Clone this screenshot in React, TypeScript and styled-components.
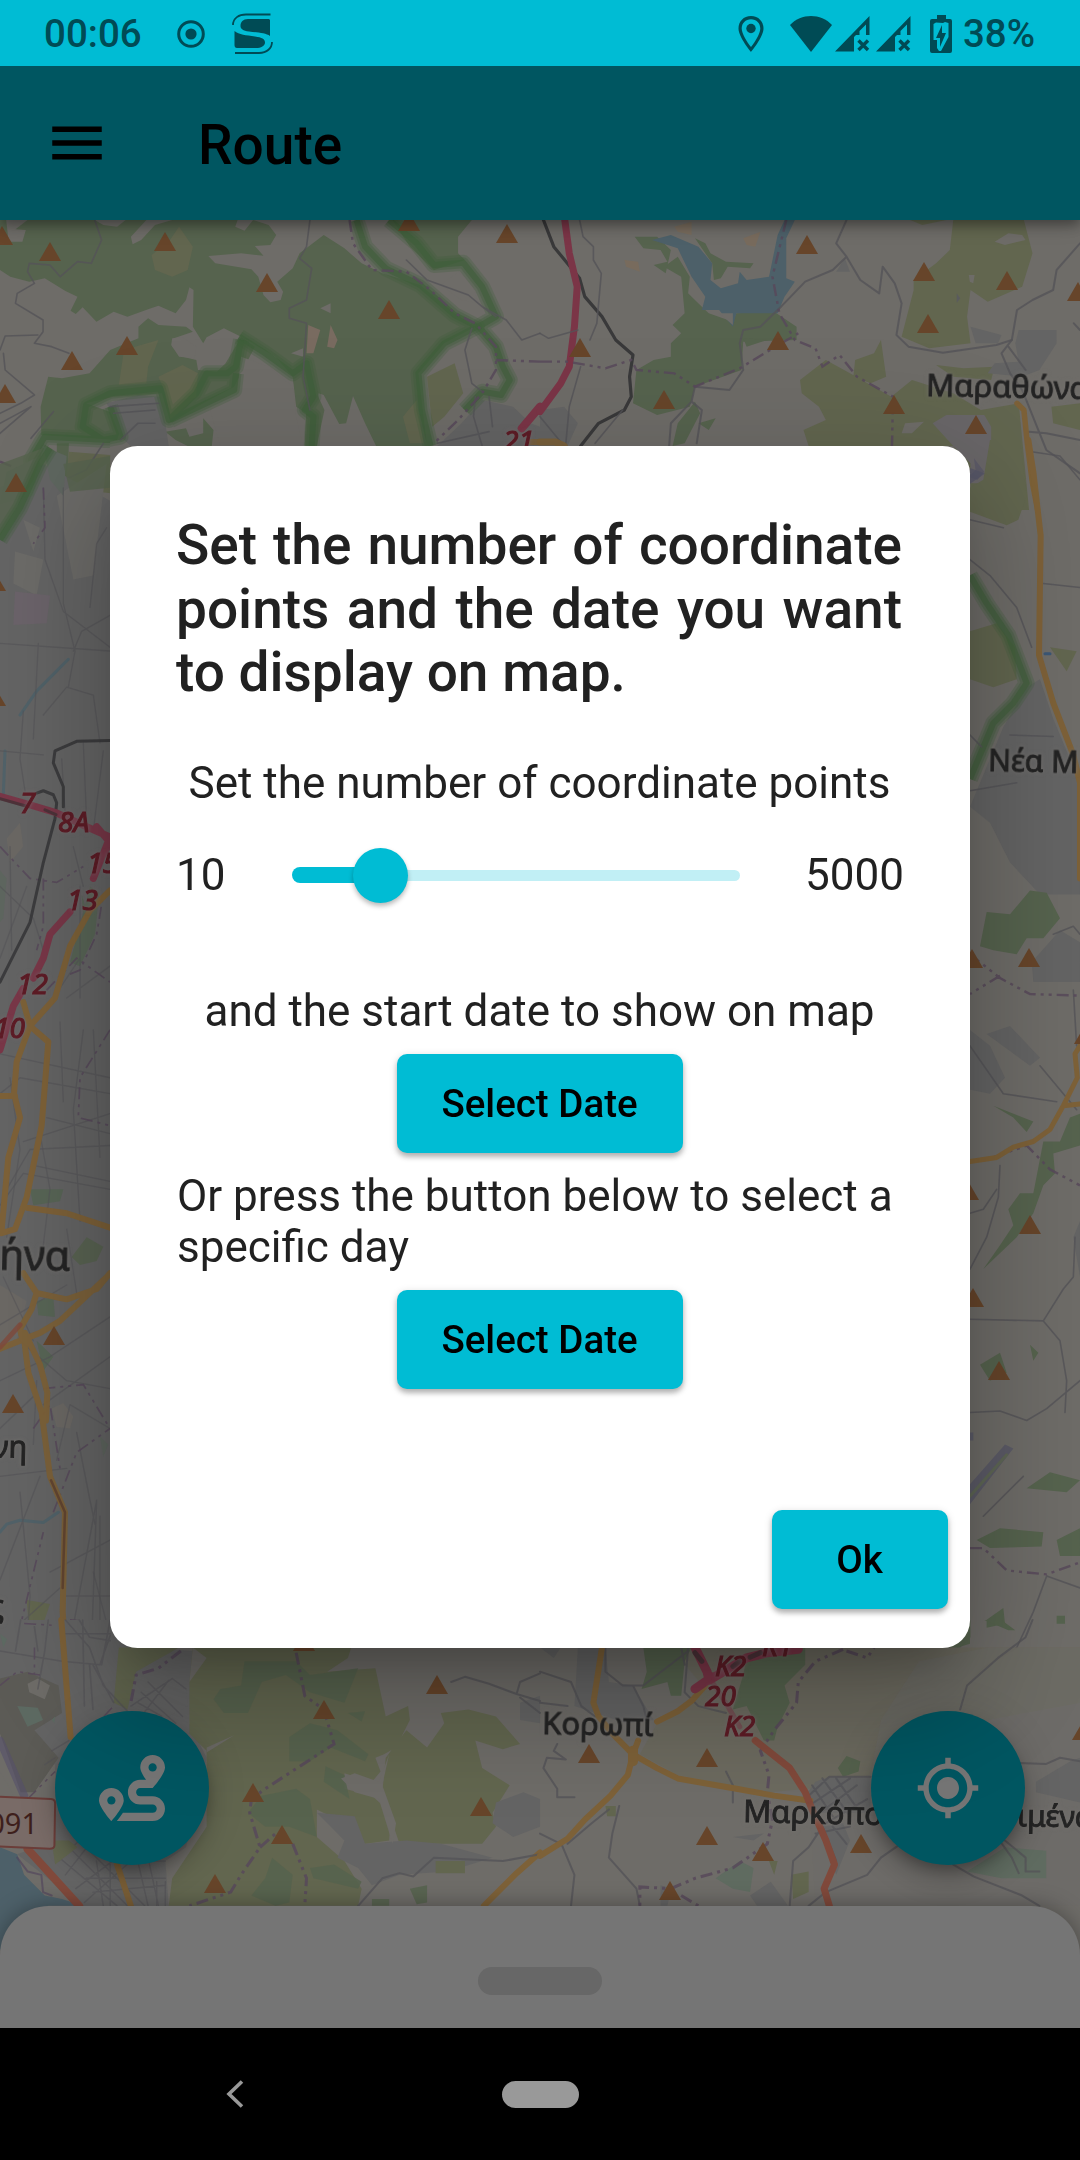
import React from "react";
import styled, { createGlobalStyle, css } from "styled-components";
import { FaRoute } from "react-icons/fa";
import { MdMenu, MdMyLocation } from "react-icons/md";

const cyan = "#00bcd4";
const statusInk = "#004b55";

const GlobalStyle = createGlobalStyle`
  * { box-sizing: border-box; }
  body { margin: 0; background: #000; font-family: Roboto, sans-serif; }
`;

const Screen = styled.div`
  width: 1080px;
  height: 2160px;
  display: flex;
  flex-direction: column;
  overflow: hidden;
  position: relative;
`;

const StatusBar = styled.header`
  height: 66px;
  flex: none;
  z-index: 2;
  display: flex;
  align-items: center;
  justify-content: space-between;
  padding: 2px 45px 0 44px;
  background: ${cyan};
  color: ${statusInk};
  font-size: 38.5px;
  font-weight: 500;
  line-height: 64px;
`;

const StatusGroup = styled.div`
  display: flex;
  align-items: center;
`;

const StatusIcon = styled.svg<{ $gap?: number }>`
  display: block;
  margin-left: ${(p) => p.$gap ?? 0}px;
  fill: ${statusInk};
`;

const StatusText = styled.span<{ $gap?: number }>`
  margin-left: ${(p) => p.$gap ?? 0}px;
`;

const AppBar = styled.div`
  height: 154px;
  flex: none;
  display: flex;
  align-items: center;
  gap: 88px;
  padding: 0 44px;
  background: #005661;
  color: #000;
  box-shadow: 0 5px 11px rgba(0, 0, 0, 0.3), 0 2px 22px rgba(0, 0, 0, 0.2);
  z-index: 1;
`;

const AppTitle = styled.h1`
  margin: 0;
  font-size: 55px;
  font-weight: 500;
  line-height: 64px;
  padding-top: 4px;
`;

const MapArea = styled.main`
  flex: 1;
  position: relative;
  overflow: hidden;
  background: #6e6c68;
`;

const MapCanvas = styled.svg`
  display: block;
  path { vector-effect: non-scaling-stroke; }
`;

const LabelLayer = styled.g`
  font-family: "Noto Sans", sans-serif;
  fill: #242424;
  stroke: #242424;
  stroke-width: 0.9px;
  filter: drop-shadow(0 0 2px #75726f);
`;

const JunctionLayer = styled.g`
  font-family: "Noto Sans", sans-serif;
  font-style: italic;
  font-size: 28px;
  fill: #5e1c26;
  stroke: #5e1c26;
  stroke-width: 1.1px;
  filter: drop-shadow(0 0 2px #75686b);
`;

const BottomSheet = styled.section`
  position: absolute;
  left: 0;
  right: 0;
  bottom: 0;
  height: 122px;
  display: flex;
  justify-content: center;
  padding-top: 61px;
  border-radius: 49px 49px 0 0;
  background: #757575;
  box-shadow: 0 0 22px rgba(0, 0, 0, 0.35);
`;

const Handle = styled.div`
  width: 124px;
  height: 27.5px;
  border-radius: 14px;
  background: #676767;
`;

const Fab = styled.button<{ $side: "left" | "right" }>`
  position: absolute;
  ${(p) => p.$side}: 55px;
  bottom: 163px;
  width: 154px;
  height: 154px;
  border: 0;
  padding: 0;
  border-radius: 50%;
  display: flex;
  align-items: center;
  justify-content: center;
  background: #005661;
  color: #757575;
  box-shadow: 0 8px 14px -3px rgba(0, 0, 0, 0.25), 0 16px 28px rgba(0, 0, 0, 0.15), 0 3px 40px rgba(0, 0, 0, 0.13);
`;

const NavBar = styled.nav`
  height: 132px;
  flex: none;
  display: grid;
  grid-template-columns: 469px 142px 469px;
  align-items: center;
  justify-items: center;
  background: #000;
`;

const HomePill = styled.div`
  width: 77px;
  height: 27px;
  border-radius: 14px;
  background: #999;
`;

const Dialog = styled.section`
  position: absolute;
  z-index: 2;
  left: 110px;
  top: 446px;
  width: 860px;
  height: 1201.5px;
  display: flex;
  flex-direction: column;
  padding: 68px 66px 22px;
  border-radius: 27.5px;
  background: #fff;
  color: #212121;
  box-shadow: 0 30px 41px -19px rgba(0, 0, 0, 0.2), 0 66px 104px 8px rgba(0, 0, 0, 0.14), 0 25px 126px 22px rgba(0, 0, 0, 0.12);
`;

const DialogTitle = styled.h2`
  margin: 0 0 53px;
  padding-right: 2px;
  font-size: 55px;
  font-weight: 500;
  line-height: 63.5px;
  text-align: justify;
`;

const Body = styled.p<{ $center?: boolean }>`
  margin: 0;
  padding: 1px 0 0 1px;
  font-size: 44px;
  line-height: 51.6px;
  ${(p) => p.$center && css`padding: 0 1px 0 0; text-align: center;`}
`;

const SliderRow = styled.div`
  height: 132px;
  margin-bottom: 45px;
  display: flex;
  align-items: center;
  justify-content: space-between;
  font-size: 44px;
`;

const Track = styled.div`
  width: 448px;
  margin-right: auto;
  margin-left: 67px;
  display: flex;
  align-items: center;
`;

const ActiveTrack = styled.div`
  width: 88px;
  height: 16.5px;
  border-radius: 8px 0 0 8px;
  background: ${cyan};
`;

const RestTrack = styled.div`
  flex: 1;
  height: 11px;
  border-radius: 0 6px 6px 0;
  background: #c1eff5;
`;

const Thumb = styled.div`
  width: 55px;
  height: 55px;
  margin: 0 -27.5px;
  border-radius: 50%;
  background: ${cyan};
  box-shadow: 0 3px 5px rgba(0, 0, 0, 0.28);
  z-index: 1;
`;

const ButtonRow = styled.div<{ $end?: boolean }>`
  height: 132px;
  flex: none;
  display: flex;
  align-items: center;
  justify-content: ${(p) => (p.$end ? "flex-end" : "center")};
  ${(p) => p.$end && css`margin: auto -44px 0 0;`}
`;

const Raised = styled.button<{ $width: number }>`
  width: ${(p) => p.$width}px;
  height: 99px;
  border: 0;
  padding: 1px 1px 0 0;
  border-radius: 10px;
  background: ${cyan};
  color: #000;
  font: 500 38.5px/46px Roboto, sans-serif;
  box-shadow: 0 4px 5px rgba(0, 0, 0, 0.22), 0 2px 9px rgba(0, 0, 0, 0.15);
`;

const forest = "#56634e";
const scrub = "#62664f";
const town = "#646464";
const water = "#4d6069";
const orange = "#7d6138";
const motorway = "#7b3547";
const trunk = "#80493b";

type ShapeProps = { d: string; c?: string; w?: number; o?: number };

const Area = ({ d, c = forest, o = 1 }: ShapeProps) => <path d={d} fill={c} opacity={o} />;
const Road = ({ d, c = "#555458", w = 1.6, o = 0.8 }: ShapeProps) => (
  <path d={d} fill="none" stroke={c} strokeWidth={w} opacity={o} strokeLinejoin="round" strokeLinecap="round" />
);
const Border = ({ d, w = 2.4 }: ShapeProps) => (
  <path d={d} fill="none" stroke="#58495b" strokeWidth={w} strokeDasharray="12 5 3 5 3 5" opacity={0.85} />
);
const Park = ({ d }: ShapeProps) => (
  <g fill="none" stroke="#3f5f3a" strokeLinejoin="round">
    <path d={d} strokeWidth={16} opacity={0.28} />
    <path d={d} strokeWidth={11} opacity={0.35} />
    <path d={d} strokeWidth={6} opacity={0.6} />
  </g>
);

const NorthWest = () => (
  <g transform="translate(0 210) scale(.3444 .3333)">
    <Area d="M0 30H18L25 95H65L75 60 45 58 80 30H275L300 45 340 50 365 30H425L380 80 385 103 410 90 450 45 500 30H690L683 50 710 62 735 30 780 45 802 75 785 105 740 108 765 137 700 130 605 138 625 160 730 178 750 200 765 255 785 277 815 270 822 245 805 215 850 175 870 130 895 110 940 75 1000 115 1050 160 1110 190 1220 225 1320 310 1380 350 1290 400 1215 490 1240 708H1092L1060 640 1025 558 1005 640 985 642 940 555 925 550 910 600 905 708H885L890 600 860 560 850 500 800 440 700 380 650 355 600 382 590 400 560 350 562 240 550 232 540 270 510 310 460 287 430 298 370 320 330 305 280 335 240 292 220 312 205 302 225 260 190 243 130 205 85 215 30 200 0 180z" />
    <Area d="M402 350 430 325 460 345 540 350 560 365 505 385 500 410 530 440 570 450 575 480 630 485 655 460 690 400 700 380 740 410 680 530 590 580 495 638 470 550 330 560 250 580 330 610 350 660 340 690 120 675 118 590 140 500 180 505 260 490 320 420 402 385z" />
    <Area d="M850 500 905 450 915 540 942 600 920 708H885L890 610 860 590zM1140 30H1370L1330 80 1330 130 1350 150 1260 180 1190 110zM480 665 540 655 550 680 590 670 590 625 620 660 615 708H545L510 690zM165 700 200 700 195 860 170 868 160 820 125 790 165 745z" />
    <Area c={scrub} d="M360 420 460 390 430 470 425 520 345 525zM460 500 530 465 575 490 570 560 495 630 480 550zM1240 500 1320 460 1345 550 1290 620 1255 650zM440 135 490 95 520 50 560 110 545 180 500 200 450 180zM1170 620 1210 570 1230 700 1190 700zM200 725 320 735V850L190 832z" />
    <Area c="#6e6c68" d="M700 440 690 540 610 600 640 708H880L860 620 850 530 780 470zM500 385 530 382 570 410 565 445 520 440 497 405zM930 295 960 280 960 310zM845 430 880 415 880 440zM1380 360 1430 420 1435 490 1400 540 1365 500 1355 410zM1280 225 1330 185 1370 220 1390 280 1340 270z" />
    <Area c="#796b60" d="M895 345 930 360 910 430 890 430zM960 345 980 390 970 415 950 410z" />
    <Area c={town} d="M310 580 400 555 465 560 480 640 490 708H380L350 680zM1340 640 1400 570 1490 590 1540 640 1568 650V708H1270zM100 885 140 870 260 900H110z" />
    <Park d="M1035 30 1060 110 1120 175 1220 225 1320 315 1385 350 1290 400 1215 490 1225 600 1250 708" />
    <Park d="M1130 30 1210 100 1260 165 1345 158 1400 230 1440 320 1390 350 1440 410 1460 470 1480 510 1455 555 1400 545 1350 600" />
    <Park d="M695 380 770 430 850 490 890 460 910 560 885 600 910 620 905 708" />
    <Park d="M700 390 685 470 660 490 600 490 570 550 490 630 465 535 320 550 250 585 240 650 300 690 350 680 320 590M495 630 680 540 685 490M320 690 130 680 90 750 100 790 60 900" />
    <Road d="M275 30 295 90 265 160 225 155 175 200 145 165 85 160 80 185 100 220 50 250 45 280 125 330 125 365 100 400 150 410 200 430M0 420 15 378 110 375M10 430 15 480 100 555 60 580 0 610M0 640 90 590 0 670M90 685 155 605M900 30 890 110 870 145 905 175 890 270 840 295 840 325 890 340 880 500 900 600" />
    <Road d="M1180 150 1240 210 1360 255 1400 290 1470 330 1515 390 1568 370M1370 355 1350 420 1370 520 1400 545M1440 320 1400 290M300 700 250 780 165 820 165 900M1380 560 1375 620 1400 708M1420 560 1430 650M1270 700 1420 665M320 590 460 580M330 610 450 600M350 690 400 640 450 640" />
    <Border d="M1015 30 1025 100 1080 180 1180 185 1250 240 1320 310 1380 340 1440 410 1440 480 1400 550 1330 630 1260 700M1440 450 1568 455" />
    <Road c={motorway} w={8} o={1} d="M1568 590 1515 655" />
    <Road c={orange} w={6} d="M1540 696H1568" />
    <Border d="M0 755 110 800 130 900" />
  </g>
);

const NorthEast = () => (
  <g transform="translate(540 210) scale(.3444 .3333)">
    <Area d="M360 170 400 140 435 200 430 250 470 290 490 310 560 335 570 310 680 305 745 350 745 390 590 395 585 480 450 530 435 590 340 615 270 580 280 480 330 450 380 440 380 400 410 370 385 345 420 310 410 200zM400 640 450 575 465 610 420 700 385 708zM460 640 510 625 490 660z" />
    <Area d="M275 80 340 80 380 120 365 190 330 165 370 155 350 120 300 115zM450 85 480 100 495 130 540 155 620 160 610 175 545 170 525 205 505 210 500 160zM590 385 660 390 600 410z" />
    <Area c={scrub} d="M1200 30H1405L1430 130 1400 230 1300 275 1250 240 1240 320 1250 400 1130 415 1050 380 1085 240 1085 210 1150 160 1190 120zM990 390 1005 500 960 520 910 500 915 450 970 430zM755 510 830 450 900 490 1020 560 1080 510 1200 550 1280 600 1390 580 1420 900H1250V780L1200 708H780L765 660 830 630 810 590 760 550zM1485 590 1568 580V660L1490 640zM1150 465 1230 475 1320 470 1310 510 1200 500zM1075 30H1180L1110 45z" />
    <Area c={water} d="M325 90 380 75 460 110 500 160 495 210 525 235 575 220 580 185 600 210 665 200 690 75 710 30H740L715 85 715 205 740 215 710 260 690 310H570L560 350 520 300 470 300 480 260 440 200 400 115z" />
    <Area c={town} d="M1390 360 1500 360 1500 400 1450 480 1400 500 1300 490 1320 460 1390 455 1380 400zM1250 350 1340 375 1330 400 1265 400zM860 185 885 145 900 185zM0 600 70 590 110 640 80 708H0z" />
    <Area c="#696668" d="M1140 640 1180 615H1290L1310 650V820H1250V760L1200 708z" />
    <Area c="#6e6c68" d="M1320 95 1360 70 1400 75 1410 90 1350 105zM1245 195 1262 195 1258 220 1248 215zM1050 670 1060 640 1115 635 1080 670zM520 310 560 310 560 345z" />
    <Area c="#7b6b5a" o={0.8} d="M390 50 440 35 440 75 400 65zM590 85 640 65 625 110 600 105zM245 150 285 155 290 185 250 170z" />
    <Road c="#39393a" w={3.2} o={1} d="M10 30 40 110 115 205 130 260 180 320 220 390 270 435 260 500 265 560 245 600 170 640 118 708" />
    <Road c={motorway} w={7} o={1} d="M72 30 85 130 108 230 100 350 85 470 60 520 0 605" />
    <Road d="M115 30 125 80 155 110 155 150 178 190 165 340 145 390M0 370 25 385 110 360M118 470 85 590 75 700M0 620 70 708M240 600 160 700" />
    <Road d="M890 30 860 100 890 140 850 180 770 215 700 290 680 310 640 350 590 360 580 400 590 480 550 540 450 530 440 575 380 640 375 708M440 575 470 600 455 700M890 140 930 210 985 250 995 170 1030 220 1050 280 1035 375 1070 410 1170 428 1325 405 1370 390 1385 300 1430 270 1490 240 1500 180 1568 100" w={2} />
    <Road d="M1370 390 1340 430 1365 490 1400 540 1470 720 1568 790M1360 410 1410 480M1420 665 1470 670 1568 690M1550 340 1568 360" w={2} />
    <Border d="M715 30 675 200 695 310 740 390 800 415 820 470 870 435 920 500 1025 560 1022 708M0 455 80 455 190 475 265 450 280 480 390 490 450 530 580 475 660 425 750 370" />
    <Road c={orange} w={5.5} o={1} d="M1385 580 1405 600 1415 700 1430 820 1445 900" />
    <Road c={orange} w={7} o={0.9} d="M0 696H45L70 708" />
    <Area c="#555468" o={0.6} d="M1260 745 1290 785 1270 810 1245 800 1265 780zM1210 250 1220 265 1210 278z" />
  </g>
);

const WestStrip = () => (
  <g transform="translate(0 440) scale(.3333 .79719)">
    <Area c={town} d="M0 60 130 30 390 90V1568H0z" />
    <Area c="#6c6b68" d="M170 70 320 30 280 170 220 175zM45 140 130 150 110 195 40 180zM70 100 120 110 100 140z" />
    <Area c="#6b636a" d="M45 190 150 195 140 230 40 232z" />
    <Area c="#566554" d="M270 560 298 568 285 620 240 660 210 655zM90 940 190 940 180 955 100 960zM110 1080 160 1075 165 1100 115 1098zM110 1130 160 1150 130 1168zM245 570 260 590 250 600z" o={0.9} />
    <Area c="#5e665f" d="M20 40 120 20 100 70 0 80zM130 8 200 20 190 70 150 50zM0 540 20 550 10 600 0 605zM300 1250 325 1260 310 1275z" />
    <Area c="#6e6a64" o={0.7} d="M155 1215 190 1208 220 1225 210 1240 170 1238zM20 500 60 480 70 510 30 530zM0 1060 80 1080 50 1130 0 1140z" />
    <Area c={scrub} d="M80 1455 150 1460 130 1485 85 1480zM330 1520 390 1500V1568H320z" />
    <Area d="M215 1025 260 1000 310 1012 290 1030 240 1035zM190 30 330 20V60L210 65zM0 30 130 10 100 50 0 120z" o={0.8} />
    <Park d="M0 125 60 85 120 30 150 10" />
    <Road c="#4d626b" w={3} d="M60 345 110 315 205 275M0 1370 20 1360 60 1355 130 1358 175 1345M15 390 10 445" />
    <Road o={0.6} w={1.3} d="M130 60 135 150 190 215 330 260M190 60V205L225 265 205 310M270 210 290 130 320 110M100 375 115 255M0 255 340 265M130 345 200 310 280 320 300 380M70 340 60 400 75 440M0 390 130 395M220 265 245 240 330 220M185 400 195 465M250 380 260 480M310 390 280 490M0 560 100 600 130 640M220 510 250 560M30 510 35 640M0 770 330 800M0 820 60 800 330 820M140 850 330 870M100 910 330 930M20 940 90 890 330 885M70 880 330 845M0 960 70 920 330 940M250 740 220 840 240 980M280 740 300 900M180 730 190 830" />
    <Road o={0.6} w={1.4} d="M0 1180 150 1150 330 1100M60 1130 200 1180 330 1190M130 1210 330 1150M0 1240 100 1200M0 1300 200 1290M60 1320 90 1450 70 1568M230 1245 270 1330 285 1360M150 1420 330 1380M200 1450H330M210 1510 290 1330 270 1568M0 1430 120 1300M20 1500 180 1440M90 1568 160 1490M230 1568 250 1500M300 1350V1568M200 1520 290 1568" />
    <Road o={0.55} w={1.3} d="M20 1000 60 890 30 800M0 650 80 560M120 870 150 940 130 1010M200 700 330 660M160 700 240 650M240 560 240 700M10 1050 100 1130M200 990 230 1070M0 1110 200 1060M170 1280 210 1210 330 1240M100 1260 110 1180M280 1420 330 1500" />
    <Border w={1.7} d="M130 60 135 110 100 130M0 510 90 550 170 555 250 535M330 740 240 800 235 850 330 860M130 550 130 610 110 640M210 670 240 665 290 620 310 570M140 690 230 650 330 680M30 1540 130 1370M210 1480 330 1485M160 1345 230 1270 330 1240M100 1240 150 1210 180 1290M130 1190 250 1185 330 1240" />
    <Road c="#38383a" w={3} o={0.9} d="M330 377 230 378 165 390 160 405 190 435 190 460M110 443 130 440 160 445 170 455 165 475 130 530 90 605 0 680" />
    <Road c={motorway} w={7} o={0.95} d="M0 447 85 457 165 467 270 487 330 498 280 550M210 592 150 620 130 650 100 675M70 688 40 710 0 765M290 485 330 505 310 520" />
    <Road c="#3c3134" w={3} o={0.7} d="M0 450 85 460M135 464 168 470" />
    <Road c={orange} w={6} o={1} d="M330 565 270 590 210 635 165 700 90 735 50 780 42 820 60 850 25 900 5 990M70 705 90 735 145 755 125 860 80 950 45 990 5 995M0 823H45M80 963 200 970 330 988" />
    <Road c={orange} w={6} o={0.95} d="M330 1045 290 1065 200 1078 110 1070 70 1045M110 1070 95 1090 60 1115 65 1125M330 1046 180 1105 120 1120 0 1140M70 1120 85 1170 125 1220 150 1300 195 1345 188 1470 205 1568M75 1120 120 1160 142 1195 138 1230" />
    <Road c="#604331" w={2.5} o={0.9} d="M153 1305 195 1345 188 1440" />
    <Road c={trunk} w={5} d="M0 1138 60 1110" />
  </g>
);

const EastStrip = () => (
  <g transform="translate(950 440) scale(.3333 .79719)">
    <Area c={scrub} d="M60 60 100 50 120 0 210 0 230 70 205 100 170 107 60 90zM60 240 140 230 195 260 200 300 130 310 60 300zM300 260 380 265 350 290z" />
    <Area c={town} d="M60 460 160 360 230 310 270 300 310 350 390 430V570H270L180 530 120 480zM60 740 120 760 165 800 120 820 60 815zM110 745 180 735 270 775 240 785zM245 655 330 615 390 630V680H250zM370 1000 390 980V1050z" />
    <Area d="M110 592 180 595 240 565 290 568 330 600 280 625 230 625 200 645 130 640 90 635zM100 1040 150 1010 190 985 175 965 210 945 250 945 280 880 330 880 360 850 390 845V885L310 895 315 920 280 935 250 970 200 1000zM320 1380 390 1365V1400L330 1400zM80 1380 150 1365 280 1370 275 1388 120 1390zM230 1315 300 1295 390 1305 350 1320zM90 1160 150 1145 170 1170 120 1180z" />
    <Area d="M130 835 250 855 230 868 190 850zM110 1480 160 1465 165 1485 110 1490zM60 1490V1510L20 1515zM240 1135 265 1145 250 1155zM320 1475H345V1485H320z" />
    <Area c="#545467" o={0.7} d="M60 1310 165 1260 190 1265 60 1335zM60 1245H70V1255H60zM60 35 105 42 60 55z" />
    <Road c="#606b53" w={3} d="M60 1325 170 1273" />
    <Park d="M60 170 110 205 175 245 230 305 190 330 130 355 60 425" />
    <Road d="M60 100 160 110M60 150 120 170 200 210 245 260M280 180 390 185M250 15 330 20 390 50M60 370 95 385M180 370 310 372M60 440 200 430M60 760 160 820 320 830M270 785 380 840M150 910 145 950 110 1000 60 1040M60 1103 280 1105 340 1065 370 1050 375 1000M280 1105 330 1130 350 1180 345 1220M60 1220 150 1218 230 1230 290 1215 390 1180M60 970 100 965 140 940M370 690 380 760M310 620 370 610 390 620M40 1568 100 1540 200 1515 250 1470 290 1425 390 1440M220 1300 100 1350" />
    <Border d="M60 645 150 675 240 695 390 697M150 672 60 695M130 900 230 885 300 915 390 935M60 1390H100L170 1418 290 1423 390 1408" />
    <Road c={orange} w={6} o={1} d="M235 0 250 40 272 120 267 270 310 330 370 395 390 430V550" />
    <Road c={orange} w={5} o={1} d="M390 760 375 770 382 800 340 835 300 865 250 880 190 887 140 900 60 905M340 835 390 833" />
    <Road c="#2f5279" w={3} d="M285 268H300" />
  </g>
);

const SouthWest = () => (
  <g transform="translate(0 1620) scale(.3444 .3444)">
    <Area c={town} d="M0 0H320L400 80 560 90 550 300 600 400 540 660 480 700 490 830H240L50 680 160 640 160 420 0 320z" />
    <Area c={scrub} d="M345 80H520L395 150 370 260 330 240zM560 80H1020L1010 110 950 150 1090 140 1120 280 1185 250 1190 290 1150 370 1115 390 1090 400 1105 440 1080 470 1000 445 1000 490 1080 510 1135 560 1130 640 1060 650 980 580 920 550 920 630 1000 700 1050 780 1040 830H490L500 750 600 600 600 380 550 330 550 180zM1280 270 1360 260 1440 280 1510 360 1460 375 1380 350 1400 430 1480 480 1430 560 1440 600 1400 650H1160L1110 500 1120 400 1180 320 1240 370 1290 300z" />
    <Area c="#5c5b56" d="M0 170 80 150 170 190 180 270 100 320 170 400 100 500H60L0 330z" />
    <Area c={water} d="M0 660 50 680 70 740 130 800 180 810 240 830 140 830 60 870 0 960z" />
    <Area d="M620 230 640 200 700 190 710 120H860L900 160 1040 140 1000 240 900 210 830 160 760 180 720 270 650 270zM840 340 900 300 980 320 1070 390 1060 410 960 370 900 410H840zM945 425 1000 450 1015 520 940 470zM720 560 760 510 860 490 900 520 920 630 840 600 770 600zM900 720 970 710 1050 760 1040 780 910 750zM730 800 770 750 790 690 850 740 840 820 800 830zM1190 780 1240 770 1240 820 1210 825zM1080 810 1130 810V830H1080zM1010 270 1060 265 1050 295z" o={0.85} />
    <Area c="#5d6a62" d="M50 250 110 255 125 290 80 310zM0 40 20 55 10 80zM150 290 160 280 158 300z" />
    <Area c={town} d="M920 560 1030 570 1060 650 1180 640 1280 650 1430 690 1300 730 1160 740 1080 770 1040 720 980 690 1000 640zM1440 530 1520 500 1568 520V600L1490 630 1430 590zM1510 240 1568 220V300L1510 290zM380 250 480 175 540 200 545 250 470 290z" />
    <Area c="#6e6c68" d="M80 185 110 170 145 190 130 230 85 210zM990 460 1030 445 1100 470 1130 390 1110 480 1150 590 1140 650 1100 520 1030 500zM0 440 40 510H0zM560 80 600 110 550 180zM600 370 680 335 600 385z" />
    <Road o={0.65} w={1.6} d="M0 90 180 120 290 130 320 45M190 0 260 80 300 190 370 265M240 0 245 250M180 40H320M320 0 295 130M100 20 110 90M60 0 45 90M260 130 270 260M270 130 330 240M140 0 130 90 110 200M230 0 260 50 320 60" />
    <Road o={0.65} w={1.4} d="M170 700 230 640M190 740 260 650M220 780 340 690M245 820 380 700M160 680 340 830M190 650 370 830M230 640 420 830M280 700 300 830M400 700 430 830M430 690 460 830M320 700V830M350 700H480M250 750H480M270 790 480 770M455 760V830M480 760V830M380 250 500 170 540 200M430 180 530 280M410 210 510 300M400 240 470 280M490 175 410 280M150 380 200 350M130 420 160 400" />
    <Road c="#56506a" w={8} o={0.6} d="M0 350 70 510" />
    <Road c={orange} w={6} o={1} d="M178 0 205 340M340 710 380 830M1568 675 1500 735 1405 830" />
    <Road c={trunk} w={8} o={1} d="M80 665 230 830" />
    <Road d="M1310 180 1350 165 1420 185 1500 215 1568 235M1500 215 1510 180 1568 155M1040 830 1110 750 1160 735 1200 745 1260 690 1460 700 1568 680M1568 270 1510 225" w={2} />
    <Border w={3} d="M525 90 460 140 395 160 380 240 M860 95 885 220 940 260 970 360 770 490 730 520 725 560 755 660 700 740 670 790 550 830M850 650 890 750 885 830M755 660 800 620" />
    <Border w={1.5} d="M0 190 50 150 120 160M100 80V160M70 10 150 15M80 520 160 440M170 420 330 250" />
    <Road c="#50425c" o={0.6} w={2} d="M50 690 80 730 120 740 125 790 150 800" />
    <Area c={scrub} d="M150 640 200 640 225 660 160 710zM1265 700H1350V735H1265z" />
    <path d="M-20 512 148 520Q160 521 160 532L158 655Q157 664 145 664L-20 657Z" fill="#796b67" stroke="#6b3d39" strokeWidth={2} />
  </g>
);

const SouthEast = () => (
  <g transform="translate(540 1620) scale(.3444 .3444)">
    <Area c="#6b6a5c" d="M380 80H1568V240L1300 290 1020 450 780 490 660 500 400 450 290 390 340 300 480 200z" o={0.8} />
    <Area c="#6e6c68" d="M1100 120 1300 80H1568V830H800L780 500 960 450 990 290z" o={0.55} />
    <Area c={town} d="M110 80H190L200 180 270 190 330 290 250 300 100 250zM0 80H60L40 110zM770 510 800 470 840 455H960V560H800zM820 600 880 590 900 640 860 740 840 690zM1440 470 1540 410 1568 400V530L1440 500zM560 630 650 620 620 640zM610 800 670 760 720 830H630zM350 770 380 780 370 830H350z" />
    <Area d="M300 80H440L420 120 410 220 380 220 370 180 295 200 310 150zM600 110 660 80H770L770 130 710 190 725 240 690 310 680 350 650 350 600 250 560 260 590 160zM865 430 890 395 930 410 925 440 880 455zM1290 0 1340 0 1380 30 1360 30zM1180 80 1250 0V50L1220 80z" />
    <Area c="#5f6b60" d="M510 750 580 700 620 720 610 790 560 780zM1240 730 1350 660 1470 670 1470 750H1340z" />
    <Area c={scrub} d="M190 540H220V570H195zM730 740 780 730 780 790 735 810zM665 700 690 700 680 740z" />
    <Road d="M190 80 190 150 240 190 300 190 430 90M430 80 420 210 460 250 540 270M270 190 300 250 310 290M0 150 90 180 120 250 160 280M0 240 80 250M50 360 40 380 75 405 20 400 10 430 50 490 50 515 100 515M230 540 210 620 200 690 280 780 290 830M60 645 100 740 90 830M60 650 0 620M200 550 150 590 80 650M410 80 420 130" w={2} />
    <Road d="M960 455H840L780 510M780 540 900 460M800 570 920 480M830 590 950 520M790 480 850 570M820 460 900 570M860 460 930 560M820 600 780 660 735 700 725 830M820 600 860 700M850 600 890 650M800 620 900 600M1040 655 990 690 950 740 830 790 780 830M1200 710 1260 745 1400 800 1450 830M1390 415 1470 418 1510 400 1568 410M1220 260 1240 190 1330 110 1410 50 1430 0M1320 620 1370 690 1390 735M1350 640 1410 690 1410 730H1450M540 440 560 480 560 530" w={2} />
    <Border w={3} d="M880 85 800 120 750 180 745 240 680 320 640 380 665 450 660 500 675 580 660 650 560 720 450 750 380 780 290 775V830M410 800 460 830M890 90 950 110 970 80" />
    <Road c={orange} w={6} o={1} d="M180 80 155 240 170 280 210 330 270 390 255 450 205 510 130 580 80 635 0 685M270 390 340 430 400 460 570 490 680 510 785 525M480 190 440 235 400 265 340 295M270 390 285 350" />
    <Road c={orange} w={10} o={1} d="M270 380V410" />
    <Road c={motorway} w={9} o={1} d="M450 80 485 150 490 170M450 200 500 165M490 175 600 110 660 95 750 85" />
    <Road c={motorway} w={5} o={0.5} d="M500 180 545 250 580 310" />
    <Road c="#443438" w={5} o={0.8} d="M450 95 470 120M560 135 580 120M610 108 640 95" />
    <Road c={trunk} w={7} o={1} d="M625 350 725 430 770 500 790 550 830 640 855 710 825 780 840 830" />
  </g>
);

const peaks: [number, number][] = [
  [2, 236], [50, 252], [165, 242], [267, 283], [389, 310], [409, 222], [507, 234], [127, 346], [72, 361], [5, 394],
  [16, 483], [807, 245], [924, 272], [1007, 281], [1078, 292], [928, 324], [778, 341], [580, 348], [664, 400],
  [894, 405], [976, 425], [-5, 582], [-5, 697], [54, 1336], [13, 1404], [972, 959], [1029, 958], [1030, 1225],
  [968, 1191], [973, 1298], [999, 1371], [1085, 1035], [304, 1642], [437, 1685], [324, 1710], [253, 1793],
  [282, 1835], [215, 1884], [481, 1807], [589, 1754], [707, 1758], [707, 1836], [763, 1852], [861, 1844],
  [670, 1891], [1083, 1731],
];

type MapLabel = { x: number; y: number; t: string; s?: number; end?: boolean };

const places: MapLabel[] = [
  { x: 926, y: 396, t: "Μαραθώνα", s: 31 },
  { x: 988, y: 771, t: "Νέα Μ", s: 30 },
  { x: 70, y: 1271, t: "ήνα", s: 41, end: true },
  { x: 27, y: 1458, t: "νη", s: 31, end: true },
  { x: 4, y: 1617, t: "ς", s: 31, end: true },
  { x: 542, y: 1734, t: "Κορωπί", s: 31 },
  { x: 743, y: 1822, t: "Μαρκόπο", s: 31 },
  { x: 1017, y: 1826, t: "ιμένα", s: 30 },
];

const junctions: MapLabel[] = [
  { x: 503, y: 451, t: "21" }, { x: 20, y: 813, t: "7" }, { x: 58, y: 832, t: "8A" }, { x: 87, y: 873, t: "15" },
  { x: 67, y: 910, t: "13" }, { x: 17, y: 994, t: "12" }, { x: -6, y: 1038, t: "10" }, { x: 762, y: 1656, t: "K1" },
  { x: 715, y: 1676, t: "K2" }, { x: 705, y: 1706, t: "20" }, { x: 724, y: 1736, t: "K2" },
];

const TerrainMap = () => (
  <MapCanvas width="1080" height="1808" viewBox="0 220 1080 1808">
    <NorthWest />
    <NorthEast />
    <WestStrip />
    <EastStrip />
    <SouthWest />
    <SouthEast />
    {peaks.map(([x, y]) => (
      <path key={`${x}-${y}`} d={`M${x - 11} ${y + 9}L${x} ${y - 10}L${x + 11} ${y + 9}Z`} fill="#67452a" />
    ))}
    <LabelLayer>
      {places.map((p) => (
        <text key={p.t} fontSize={p.s} textAnchor={p.end ? "end" : "start"} transform={`translate(${p.x} ${p.y}) rotate(1.2)`}>
          {p.t}
        </text>
      ))}
    </LabelLayer>
    <JunctionLayer>
      {junctions.map((p) => (
        <text key={`${p.t}-${p.y}`} x={p.x} y={p.y}>{p.t}</text>
      ))}
    </JunctionLayer>
    <text x={38} y={1834} textAnchor="end" fontFamily="'Noto Sans', sans-serif" fontSize={29} fill="#3e1f1c">091</text>
  </MapCanvas>
);

const SignalIcon = ({ gap }: { gap: number }) => (
  <StatusIcon width="35" height="36" viewBox="0 0 35 36" $gap={gap}>
    <path d="M0 35.500 34.500 0V19H31V8.500L24.500 15V19H21L19 21V35.500Z" />
    <path d="M23.500 24.500 33 34M33 24.500 23.500 34" stroke={statusInk} strokeWidth="3.400" />
  </StatusIcon>
);

export default function App() {
  return (
    <>
      <GlobalStyle />
      <Screen>
        <StatusBar>
          <StatusGroup>
            <StatusText>00:06</StatusText>
            <StatusIcon width="28" height="28" viewBox="0 0 28 28" $gap={35}>
              <circle cx="14" cy="14" r="12.300" fill="none" stroke={statusInk} strokeWidth="3" />
              <circle cx="14" cy="14" r="5.600" />
            </StatusIcon>
            <StatusIcon width="42" height="42" viewBox="0 0 42 42" $gap={27}>
              <path d="M1 12C1 5 7 1.500 14 1.500H38.500M3 40H27C35 40 40 35 40 29" fill="none" stroke={statusInk} strokeWidth="1.800" />
              <path d="M38 7V23C34 20 25 19.500 17 18.500 11 17.700 8.500 16 8.500 13 8.500 9 11 6 16 6H37ZM2.500 18C7 22 14 22 23 23.500 30 24.500 33 26 33 29.500 33 33 29 35 24 35H5Q2.500 35 2.500 32Z" />
            </StatusIcon>
          </StatusGroup>
          <StatusGroup>
            <StatusIcon width="26" height="36" viewBox="0 0 26 36">
              <path fillRule="evenodd" d="M13 0C5.500 0 .5 5.500 .5 12.500 .5 21 13 36 13 36S25.500 21 25.500 12.500C25.500 5.500 20.500 0 13 0ZM13 3.200C18.500 3.200 22.300 7.200 22.300 12.500 22.300 17.500 17 26 13 31 9 26 3.700 17.500 3.700 12.500 3.700 7.200 7.500 3.200 13 3.200Z" />
              <circle cx="13" cy="12.500" r="4.700" />
            </StatusIcon>
            <StatusIcon width="42" height="36" viewBox="0 0 42 36" $gap={26}>
              <path d="M0 9C11-3 31-3 42 9L21 36Z" />
            </StatusIcon>
            <SignalIcon gap={3} />
            <SignalIcon gap={6} />
            <StatusIcon width="22" height="38" viewBox="0 0 22 38" $gap={19}>
              <path fillRule="evenodd" d="M7 0H16V4H20Q22 4 22 6V36Q22 38 20 38H2Q0 38 0 36V6Q0 4 2 4H7ZM6 7.500 3.500 9V25H7V33L9 36H11L18.500 22V8L15 7 13 8Z" />
              <path d="M12 10V18H16L10 32V23H6Z" />
            </StatusIcon>
            <StatusText $gap={11}>38%</StatusText>
          </StatusGroup>
        </StatusBar>
        <AppBar>
          <MdMenu size={66} />
          <AppTitle>Route</AppTitle>
        </AppBar>
        <MapArea>
          <TerrainMap />
          <Fab $side="left" aria-label="Route"><FaRoute size={66} /></Fab>
          <Fab $side="right" aria-label="My location"><MdMyLocation size={66} /></Fab>
          <BottomSheet><Handle /></BottomSheet>
        </MapArea>
        <NavBar>
          <svg width="18" height="28" viewBox="0 0 18 28" fill="none" stroke="#999" strokeWidth="3.600">
            <path d="M16 1.500 3 14 16 26.500" />
          </svg>
          <HomePill />
        </NavBar>
        <Dialog role="dialog">
          <DialogTitle>Set the number of coordinate points and the date you want to display on map.</DialogTitle>
          <Body $center>Set the number of coordinate points</Body>
          <SliderRow>
            <span>10</span>
            <Track>
              <ActiveTrack />
              <Thumb />
              <RestTrack />
            </Track>
            <span>5000</span>
          </SliderRow>
          <Body $center>and the start date to show on map</Body>
          <ButtonRow><Raised $width={286}>Select Date</Raised></ButtonRow>
          <Body>Or press the button below to select a specific day</Body>
          <ButtonRow><Raised $width={286}>Select Date</Raised></ButtonRow>
          <ButtonRow $end><Raised $width={176}>Ok</Raised></ButtonRow>
        </Dialog>
      </Screen>
    </>
  );
}
